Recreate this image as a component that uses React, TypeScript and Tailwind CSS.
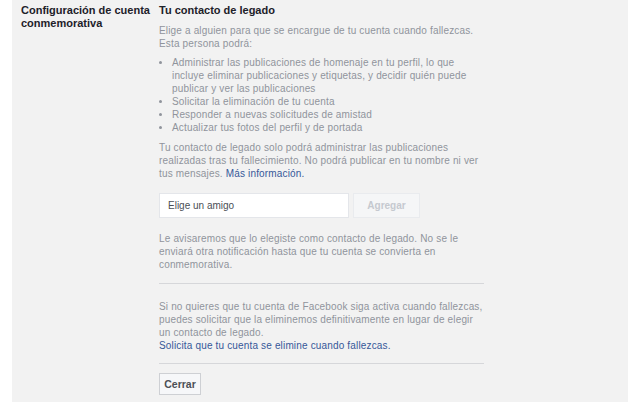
import React from "react";

export default function App() {
  const font = { fontFamily: '"Liberation Sans", Arial, sans-serif' };
  return (
    <div className="w-[640px] h-[406px] bg-white pl-[12px] pr-[12px]" style={font}>
      <div className="h-[402px] bg-[#f2f2f2] flex">
        <div className="w-[147px] pl-[9px] pt-[4px] text-[11px] leading-[13px] font-bold text-[#1d2129]">
          Configuración de cuenta conmemorativa
        </div>
        <div className="w-[325px] pt-[4px] text-[11px] leading-[13px] text-[#90949c]">
          <div className="font-bold text-[#1d2129]">Tu contacto de legado</div>
          <div className="text-[10px] leading-[13px] tracking-[0.16px] whitespace-nowrap">
            <p className="mt-[7px]">
              Elige a alguien para que se encargue de tu cuenta cuando fallezcas.
              <br />
              Esta persona podrá:
            </p>
            <ul className="mt-[6px] list-disc pl-[13px]">
              <li>
                Administrar las publicaciones de homenaje en tu perfil, lo que
                <br />
                incluye eliminar publicaciones y etiquetas, y decidir quién puede
                <br />
                publicar y ver las publicaciones
              </li>
              <li>Solicitar la eliminación de tu cuenta</li>
              <li>Responder a nuevas solicitudes de amistad</li>
              <li>Actualizar tus fotos del perfil y de portada</li>
            </ul>
            <p className="mt-[7px]">
              Tu contacto de legado solo podrá administrar las publicaciones
              <br />
              realizadas tras tu fallecimiento. No podrá publicar en tu nombre ni ver
              <br />
              tus mensajes. <span className="text-[#365899]">Más información.</span>
            </p>
            <div className="mt-[13px] flex gap-[4px]">
              <div className="w-[190px] h-[25px] bg-white border border-[#e4e6ea] flex items-center pl-[8px] tracking-normal text-[#4b4f56]">
                Elige un amigo
              </div>
              <div className="w-[67px] h-[25px] bg-[#f5f6f7] border border-[#e9ebee] flex items-center justify-center font-bold tracking-normal text-[#c5c9cf]">
                Agregar
              </div>
            </div>
            <p className="mt-[14px]">
              Le avisaremos que lo elegiste como contacto de legado. No se le
              <br />
              enviará otra notificación hasta que tu cuenta se convierta en
              <br />
              conmemorativa.
            </p>
            <div className="mt-[12px] h-px bg-[#d6d7da]" />
            <p className="mt-[16px]">
              Si no quieres que tu cuenta de Facebook siga activa cuando fallezcas,
              <br />
              puedes solicitar que la eliminemos definitivamente en lugar de elegir
              <br />
              un contacto de legado.
              <br />
              <span className="text-[#365899]">Solicita que tu cuenta se elimine cuando fallezcas.</span>
            </p>
            <div className="mt-[11px] h-px bg-[#d6d7da]" />
          </div>
          <div className="mt-[9px] w-[42px] h-[22px] bg-[#f6f7f9] border border-[#ced0d4] flex items-center justify-center text-[10.5px] font-bold text-[#4b4f56]">
            Cerrar
          </div>
        </div>
      </div>
    </div>
  );
}
